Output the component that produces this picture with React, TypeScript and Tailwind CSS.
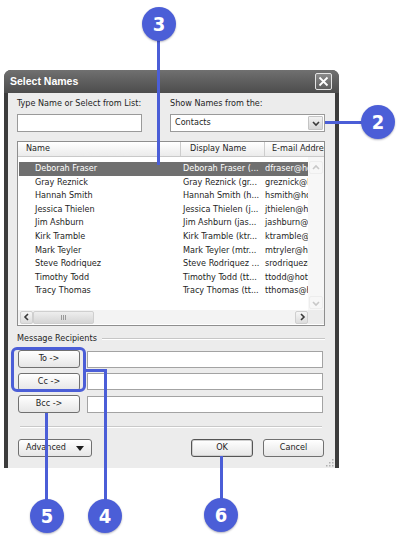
import React from 'react';

const people = [
  ['Deborah Fraser', 'Deborah Fraser (...', 'dfraser@hotmail.com'],
  ['Gray Reznick', 'Gray Reznick (gr...', 'greznick@hotmail.com'],
  ['Hannah Smith', 'Hannah Smith (h...', 'hsmith@hotmail.com'],
  ['Jessica Thielen', 'Jessica Thielen (j...', 'jthielen@hotmail.com'],
  ['Jim Ashburn', 'Jim Ashburn (jas...', 'jashburn@hotmail.com'],
  ['Kirk Tramble', 'Kirk Tramble (ktr...', 'ktramble@hotmail.com'],
  ['Mark Teyler', 'Mark Teyler (mtr...', 'mtryler@hotmail.com'],
  ['Steve Rodriquez', 'Steve Rodriquez ...', 'srodriquez@hotmail.com'],
  ['Timothy Todd', 'Timothy Todd (tt...', 'ttodd@hotmail.com'],
  ['Tracy Thomas', 'Tracy Thomas (tt...', 'tthomas@hotmail.com'],
];

function Chevron({ dir, faint }: { dir: 'up' | 'down' | 'left' | 'right'; faint?: boolean }) {
  const pts = {
    up: '2,6 5,3 8,6',
    down: '2,4 5,7 8,4',
    left: '6,2 3,5 6,8',
    right: '4,2 7,5 4,8',
  }[dir];
  return (
    <svg width="10" height="10" viewBox="0 0 10 10">
      <polyline points={pts} fill="none" stroke={faint ? '#c8c8c8' : '#3a3a3a'} strokeWidth="1.6" />
    </svg>
  );
}

function WinButton({ children, strong }: { children: React.ReactNode; strong?: boolean }) {
  return (
    <div
      className={
        strong
          ? 'h-full w-full rounded-[3px] border border-[#555555] bg-gradient-to-b from-white to-[#e6e6e6] flex items-center justify-center shadow-[inset_0_0_0_1px_#cfcfcf]'
          : 'h-full w-full rounded-[3px] border border-[#707070] bg-gradient-to-b from-white to-[#e6e6e6] flex items-center justify-center'
      }
    >
      {children}
    </div>
  );
}

export default function App() {
  return (
    <div className="relative w-[400px] h-[536px] bg-white overflow-hidden font-['DejaVu_Sans_Condensed','DejaVu_Sans',sans-serif] text-[9px] text-[#1e1e1e]">
      {/* dialog */}
      <div className="ml-[4px] mt-[70px] w-[335px] rounded-t-[7px] bg-[#3c3c3c]">
        <div className="h-[23px] rounded-t-[7px] bg-gradient-to-b from-[#707070] to-[#4d4d4d] flex items-center justify-between pl-[6px] pr-[7px]">
          <span className="text-white font-bold text-[10.5px] font-['Liberation_Sans',sans-serif]">Select Names</span>
          <div className="w-[17px] h-[17px] border border-[#e4e4e4] rounded-[2px] bg-gradient-to-b from-[#8a8a8a] to-[#5e5e5e] flex items-center justify-center">
            <svg width="11" height="11" viewBox="0 0 11 11">
              <path d="M1.5 1.5 L9.5 9.5 M9.5 1.5 L1.5 9.5" stroke="white" strokeWidth="1.8" />
            </svg>
          </div>
        </div>

        <div className="relative mx-[4px] mb-[4px] bg-[#ececec] pl-[9px] pr-[10px] pt-[4px] pb-[11px]">
          {/* top fields */}
          <div className="flex gap-[28px]">
            <div className="w-[125px]">
              <div className="h-[12px] leading-[12px]">Type Name or Select from List:</div>
              <div className="mt-[5px] h-[18px] border border-[#9a9a9a] bg-white" />
            </div>
            <div className="w-[155px]">
              <div className="h-[12px] leading-[12px]">Show Names from the:</div>
              <div className="mt-[5px] h-[18px] border border-[#9a9a9a] bg-white flex items-center justify-between pl-[4px] pr-[1px]">
                <span>Contacts</span>
                <div className="w-[15px] h-[14px] bg-gradient-to-b from-[#f2f2f2] to-[#d6d6d6] border border-[#c4c4c4] rounded-[1px] flex items-center justify-center">
                  <Chevron dir="down" />
                </div>
              </div>
            </div>
          </div>

          {/* list */}
          <div className="mt-[9px] h-[185px] border border-[#8e8e8e] bg-white flex flex-col">
            <div className="h-[15px] flex bg-gradient-to-b from-white to-[#ebebeb] border-b border-[#c9c9c9]">
              <div className="w-[163px] pl-[8px] flex items-center border-r border-[#cdcdcd]">Name</div>
              <div className="w-[84px] pl-[9px] flex items-center border-r border-[#cdcdcd]">Display Name</div>
              <div className="flex-1 pl-[7px] flex items-center overflow-hidden whitespace-nowrap">E-mail Address</div>
            </div>
            <div className="h-[153px] flex">
              <div className="w-[290px] pt-[5px]">
                {people.map(([name, display, email], i) => (
                  <div
                    key={name}
                    className={
                      i === 0
                        ? 'h-[13.6px] flex items-center ml-[1px] bg-[#6f6f6f] text-white whitespace-nowrap'
                        : 'h-[13.6px] flex items-center ml-[1px] whitespace-nowrap'
                    }
                  >
                    <div className="w-[162px] pl-[16px] overflow-hidden">{name}</div>
                    <div className="w-[83px] pl-[2px] overflow-hidden">{display}</div>
                    <div className="flex-1 pl-[1px] overflow-hidden">{email}</div>
                  </div>
                ))}
              </div>
              <div className="w-[16px] bg-[#f7f7f7] flex flex-col justify-between items-center pt-[4px] pb-[1px]">
                <div className="w-[14px] h-[13px] border border-[#ededed] rounded-[2px] flex items-center justify-center">
                  <Chevron dir="up" faint />
                </div>
                <div className="w-[14px] h-[13px] border border-[#ededed] rounded-[2px] flex items-center justify-center">
                  <Chevron dir="down" faint />
                </div>
              </div>
            </div>
            <div className="h-[14px] flex">
              <div className="w-[290px] bg-[#f3f3f3] flex items-center pl-[2px]">
                <div className="w-[13px] h-[13px] bg-gradient-to-b from-[#f6f6f6] to-[#dcdcdc] border border-[#cfcfcf] rounded-[2px] flex items-center justify-center">
                  <Chevron dir="left" />
                </div>
                <div className="w-[61px] h-[13px] bg-gradient-to-b from-[#eeeeee] to-[#d5d5d5] border border-[#cfcfcf] rounded-[2px] flex items-center justify-center gap-[1px]">
                  <div className="w-[1px] h-[5px] bg-[#9a9a9a]" />
                  <div className="w-[1px] h-[5px] bg-[#9a9a9a]" />
                  <div className="w-[1px] h-[5px] bg-[#9a9a9a]" />
                </div>
                <div className="flex-1" />
                <div className="w-[13px] h-[13px] bg-gradient-to-b from-[#f6f6f6] to-[#dcdcdc] border border-[#cfcfcf] rounded-[2px] flex items-center justify-center">
                  <Chevron dir="right" />
                </div>
              </div>
              <div className="flex-1 bg-[#ececec]" />
            </div>
          </div>

          {/* recipients */}
          <div className="mt-[7px] h-[12px] flex items-center">
            <span>Message Recipients</span>
            <div className="flex-1 ml-[5px] h-[2px] border-t border-[#c6c6c6] border-b-white border-b" />
          </div>
          <div className="mt-[5px] flex flex-col gap-[4.5px]">
            {['To ->', 'Cc ->', 'Bcc ->'].map((label) => (
              <div key={label} className="flex items-center h-[18px]">
                <div className="w-[62px] h-[18px] ml-[1px]">
                  <WinButton>{label}</WinButton>
                </div>
                <div className="ml-[7px] w-[236px] h-[17px] border border-[#a3a3a3] bg-white" />
              </div>
            ))}
          </div>

          <div className="mt-[13px] mx-[3px] h-[2px] border-t border-[#c9c9c9] border-b border-b-white" />

          <div className="mt-[11px] h-[18px] flex">
            <div className="w-[74px] ml-[1px]">
              <WinButton>
                <span className="mr-[10px]">Advanced</span>
                <svg width="8" height="5" viewBox="0 0 8 5">
                  <polygon points="0,0 8,0 4,5" fill="#1e1e1e" />
                </svg>
              </WinButton>
            </div>
            <div className="flex-1" />
            <div className="w-[62px]">
              <WinButton strong>OK</WinButton>
            </div>
            <div className="w-[61px] ml-[10px] mr-[1px]">
              <WinButton>Cancel</WinButton>
            </div>
          </div>

          {/* resize grip */}
          <svg className="absolute right-[1px] bottom-[1px]" width="9" height="9" viewBox="0 0 9 9">
            <rect x="7" y="1" width="1.5" height="1.5" fill="#b0b0b0" />
            <rect x="4" y="4" width="1.5" height="1.5" fill="#b0b0b0" />
            <rect x="7" y="4" width="1.5" height="1.5" fill="#b0b0b0" />
            <rect x="1" y="7" width="1.5" height="1.5" fill="#b0b0b0" />
            <rect x="4" y="7" width="1.5" height="1.5" fill="#b0b0b0" />
            <rect x="7" y="7" width="1.5" height="1.5" fill="#b0b0b0" />
          </svg>
        </div>
      </div>

      {/* callouts */}
      <div className="absolute left-[11px] top-[347px] w-[75px] h-[45px] border-[3px] border-[#4b5ed7] rounded-[6px]" />
      <div className="absolute left-[157px] top-[38px] w-[3px] h-[127px] bg-[#4b5ed7]" />
      <div className="absolute left-[325px] top-[121px] w-[38px] h-[3px] bg-[#4b5ed7]" />
      <div className="absolute left-[85px] top-[369px] w-[22px] h-[3px] bg-[#4b5ed7]" />
      <div className="absolute left-[104px] top-[369px] w-[3px] h-[135px] bg-[#4b5ed7]" />
      <div className="absolute left-[45px] top-[413px] w-[3px] h-[90px] bg-[#4b5ed7]" />
      <div className="absolute left-[220px] top-[456px] w-[3px] h-[46px] bg-[#4b5ed7]" />

      <div className="absolute left-[142px] top-[7px] w-[34px] h-[34px] rounded-full bg-[#4b5ed7] shadow-[0_1px_2px_rgba(0,0,40,0.3)] flex items-center justify-center text-white font-bold text-[20px]">3</div>
      <div className="absolute left-[361px] top-[105px] w-[34px] h-[34px] rounded-full bg-[#4b5ed7] shadow-[0_1px_2px_rgba(0,0,40,0.3)] flex items-center justify-center text-white font-bold text-[20px]">2</div>
      <div className="absolute left-[30px] top-[499px] w-[34px] h-[34px] rounded-full bg-[#4b5ed7] shadow-[0_1px_2px_rgba(0,0,40,0.3)] flex items-center justify-center text-white font-bold text-[20px]">5</div>
      <div className="absolute left-[88px] top-[499px] w-[34px] h-[34px] rounded-full bg-[#4b5ed7] shadow-[0_1px_2px_rgba(0,0,40,0.3)] flex items-center justify-center text-white font-bold text-[20px]">4</div>
      <div className="absolute left-[204px] top-[498px] w-[34px] h-[34px] rounded-full bg-[#4b5ed7] shadow-[0_1px_2px_rgba(0,0,40,0.3)] flex items-center justify-center text-white font-bold text-[20px]">6</div>
    </div>
  );
}
